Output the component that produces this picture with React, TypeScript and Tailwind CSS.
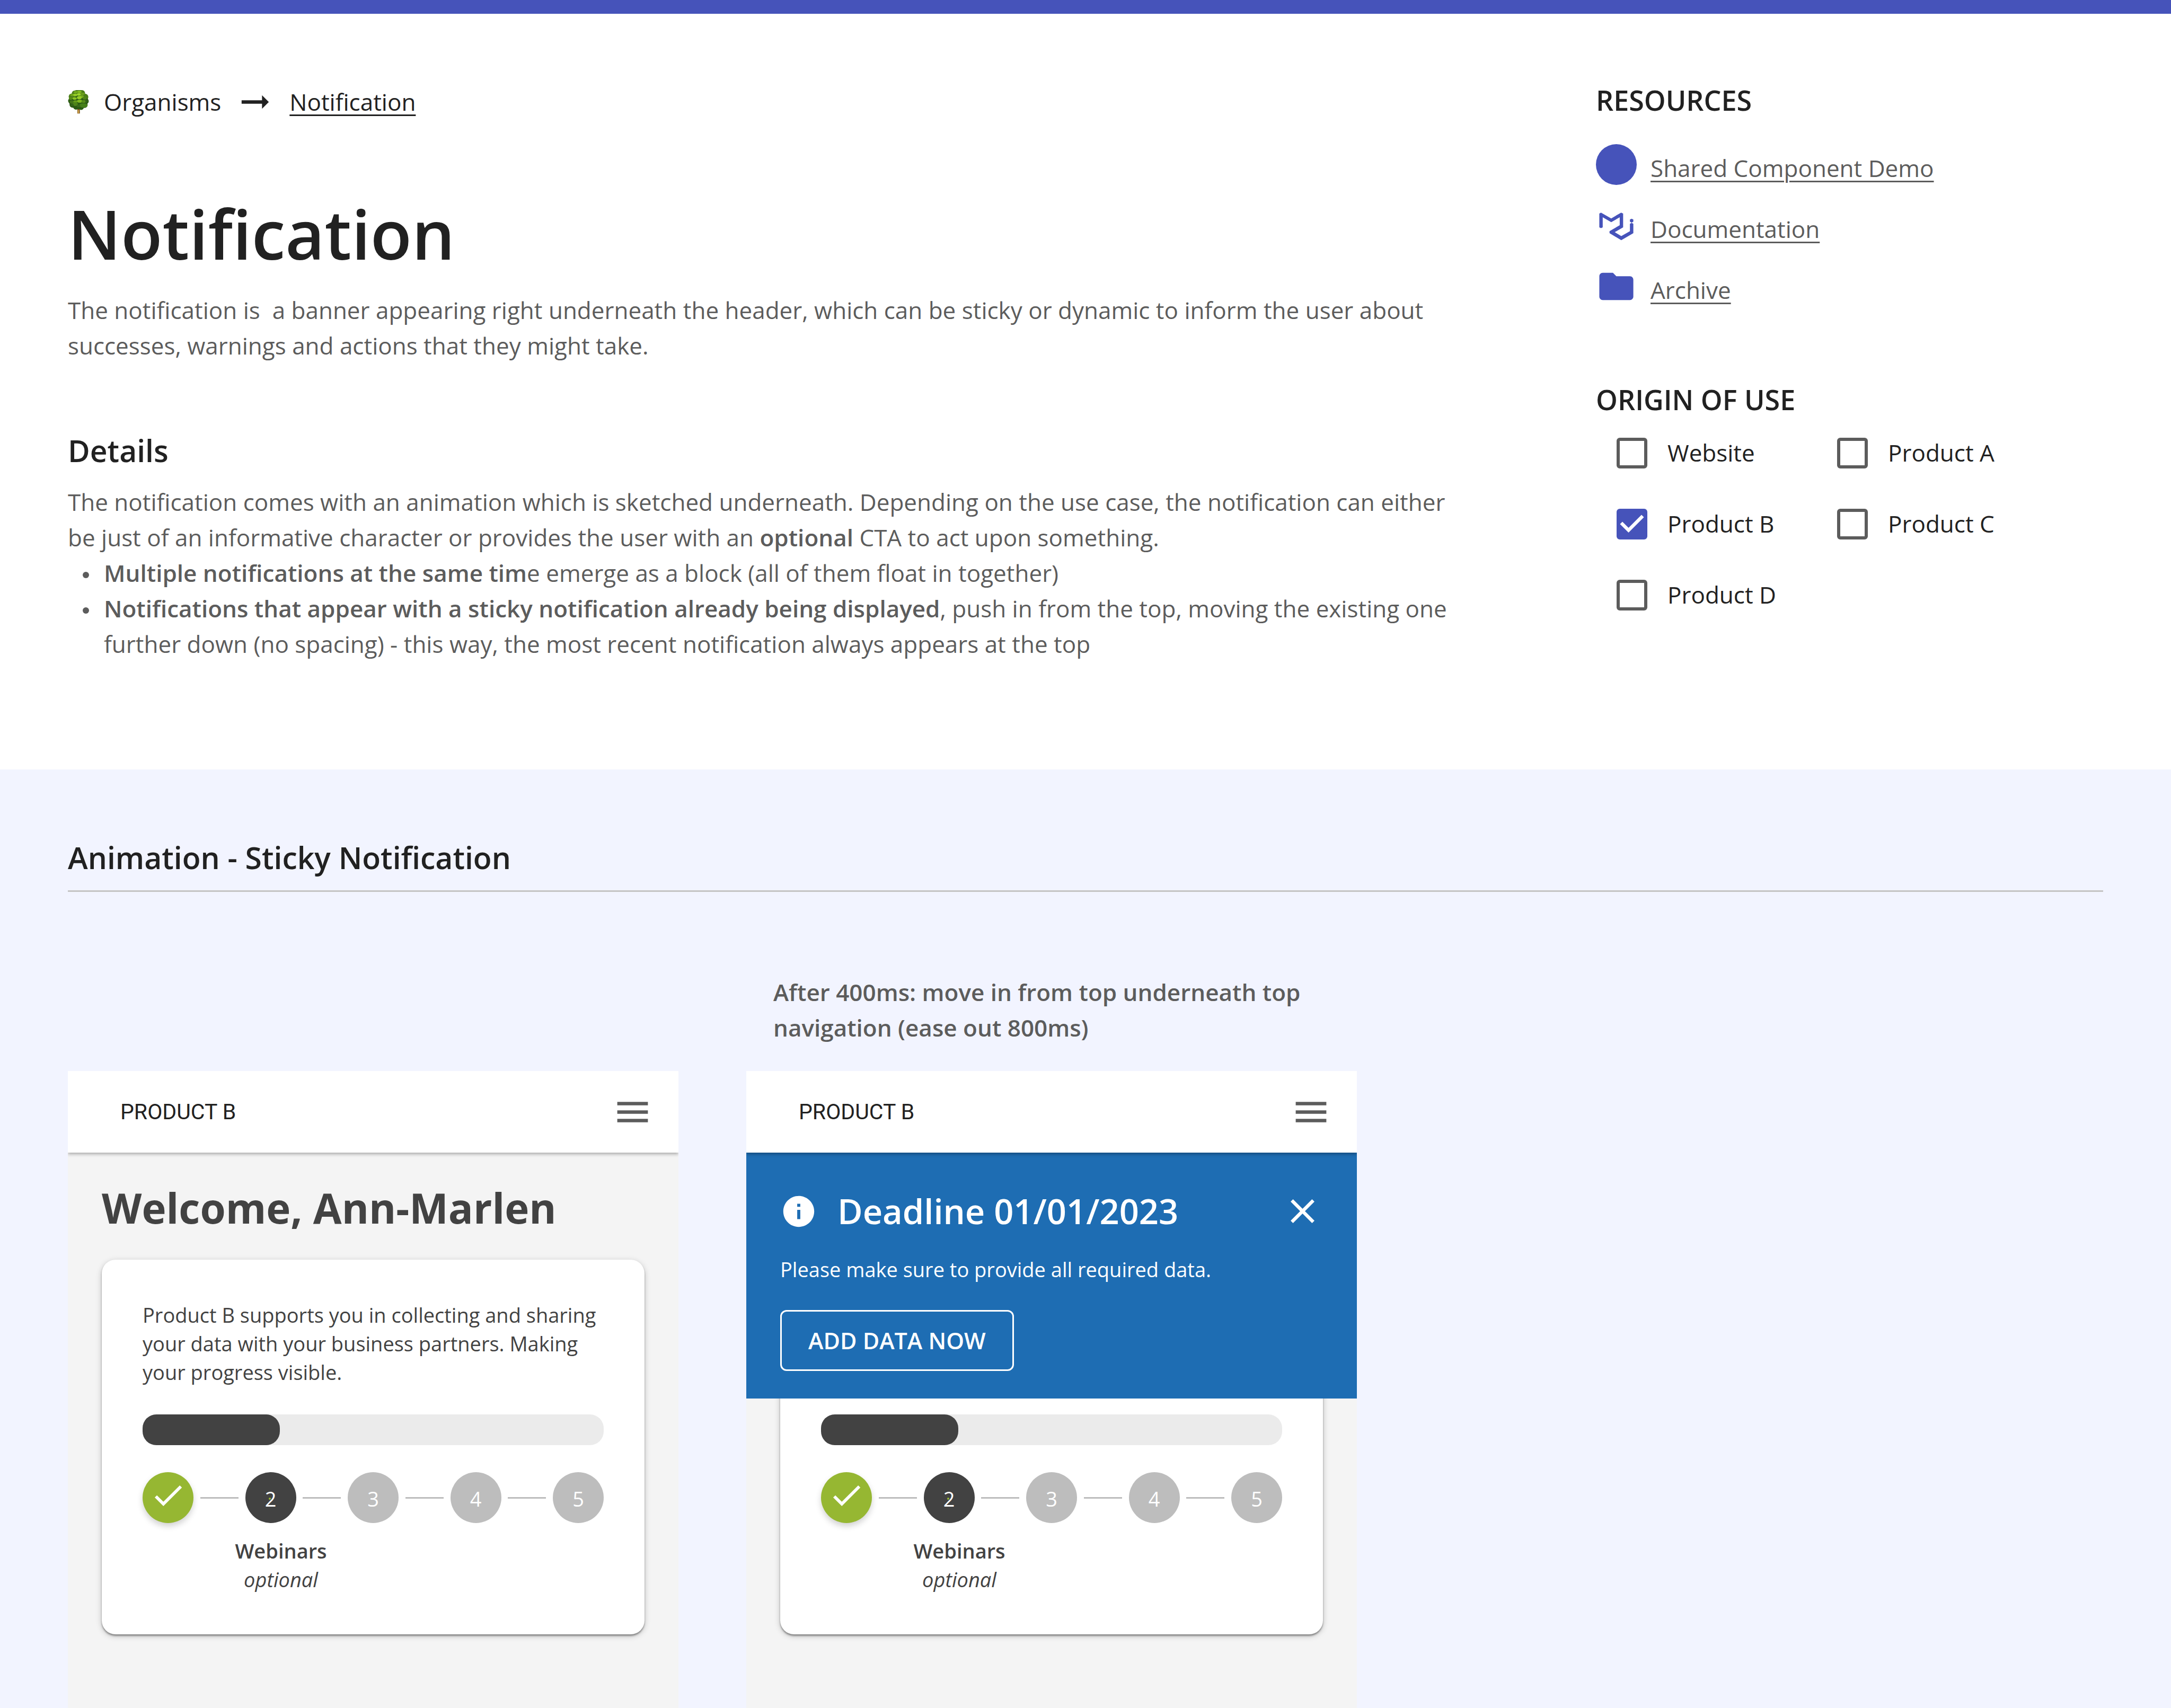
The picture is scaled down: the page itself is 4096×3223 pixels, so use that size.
import React from 'react';

const MENU = 'M3 18h18v-2H3v2zm0-5h18v-2H3v2zm0-7v2h18V6H3z';
const ARROW = 'M16.01 11H4v2h12.01v3L20 12l-3.99-4v3z';
const CLOSE = 'M19 6.41 17.59 5 12 10.59 6.41 5 5 6.41 10.59 12 5 17.59 6.41 19 12 13.41 17.59 19 19 17.59 13.41 12z';
const INFO = 'M12 2C6.48 2 2 6.48 2 12s4.48 10 10 10 10-4.48 10-10S17.52 2 12 2zm1 15h-2v-6h2v6zm0-8h-2V7h2v2z';
const FOLDER = 'M10 4H4c-1.1 0-1.99.9-1.99 2L2 18c0 1.1.9 2 2 2h16c1.1 0 2-.9 2-2V8c0-1.1-.9-2-2-2h-8l-2-2z';

function Icon({ d, className }: { d: string; className: string }) {
  return (
    <svg viewBox="0 0 24 24" fill="currentColor" aria-hidden="true" className={className}>
      <path d={d} />
    </svg>
  );
}

function TreeIcon() {
  const edges = [
    [115, 88, 26], [90, 96, 22], [140, 94, 22], [68, 118, 22], [163, 120, 22], [62, 148, 20],
    [168, 150, 20], [74, 174, 22], [158, 176, 22], [98, 190, 20], [134, 192, 20],
  ] as const;
  const leaves = [
    [95, 86, 14, 8, '#76ad1c'], [122, 84, 15, 8, '#86bf20'], [145, 98, 14, 9, '#6a9f1b'], [70, 106, 13, 9, '#6fa41c'],
    [92, 106, 14, 9, '#93cc26'], [118, 102, 14, 9, '#9dd42c'], [138, 118, 15, 10, '#74ab1e'], [160, 128, 14, 11, '#4f8417'],
    [60, 130, 13, 11, '#568b18'], [88, 131, 15, 9, '#8bc423'], [121, 125, 17, 11, '#95cd27'], [68, 156, 15, 11, '#44751a'],
    [124, 150, 20, 11, '#7fb821'], [93, 153, 14, 9, '#659b1c'], [92, 171, 19, 13, '#4d8419'], [150, 180, 30, 15, '#46801a'],
    [152, 152, 16, 10, '#558c1a'], [70, 178, 12, 9, '#33631a'], [115, 184, 13, 9, '#39691a'], [174, 150, 10, 12, '#33621a'],
  ] as const;
  return (
    <svg viewBox="40 72 150 168" aria-hidden="true" className="h-[45px] w-10">
      <rect x="107" y="200" width="18" height="38" rx="2" fill="#7a5420" />
      <rect x="110" y="212" width="9" height="25" fill="#d0a24a" />
      <ellipse cx="115" cy="143" rx="68" ry="64" fill="#2c5c14" />
      {edges.map(([cx, cy, r]) => (
        <circle key={`${cx}-${cy}`} cx={cx} cy={cy} r={r} fill={cy < 130 ? '#4a7d18' : '#2b5a14'} />
      ))}
      {leaves.map(([cx, cy, rx, ry, fill]) => (
        <ellipse key={`${cx}-${cy}`} cx={cx} cy={cy} rx={rx} ry={ry} fill={fill} />
      ))}
    </svg>
  );
}

function MuiLogo() {
  return (
    <svg viewBox="12 492 288 288" fill="currentColor" aria-hidden="true" className="size-[77px]">
      <path d="M36 552l12-7 72 41 70-41 14 7v97l-59 34 46 28 61-35v-52l12-7 12 7v66l-85 50-83-50v-14l72-42v-56l-60 35-60-35v71l-12 6-12-6z" />
      <path d="M264 588l12 6v15l-12 7-12-7v-15z" />
    </svg>
  );
}

const resources = [
  { label: 'Shared Component Demo', icon: <span className="size-[77px] rounded-full bg-[#4653ba]" /> },
  { label: 'Documentation', icon: <MuiLogo /> },
  { label: 'Archive', icon: <Icon d={FOLDER} className="size-[77px]" /> },
];

const origins = [
  { label: 'Website', checked: false },
  { label: 'Product A', checked: false },
  { label: 'Product B', checked: true },
  { label: 'Product C', checked: false },
  { label: 'Product D', checked: false },
];

function OriginCheckbox({ label, checked }: { label: string; checked: boolean }) {
  return (
    <label className="flex items-center gap-[38px] text-[44px] leading-[67px] text-[#212121]">
      <span className="grid size-[58px] place-items-center">
        <input
          type="checkbox"
          defaultChecked={checked}
          className="peer col-start-1 row-start-1 size-[58px] appearance-none rounded-md border-[6px] border-[#5c5c5c] bg-white checked:border-[#4653ba] checked:bg-[#4653ba]"
        />
        <svg
          viewBox="3 3 18 18"
          fill="white"
          aria-hidden="true"
          className="pointer-events-none invisible col-start-1 row-start-1 size-[58px] peer-checked:visible"
        >
          <path d="M10 17l-5-5 1.41-1.41L10 14.17l7.59-7.59L19 8l-9 9z" />
        </svg>
      </span>
      {label}
    </label>
  );
}

function Step({ n }: { n: number }) {
  if (n === 1) {
    return (
      <li className="grid size-24 place-items-center rounded-full bg-[#96b732] text-white shadow-[0_6px_12px_rgba(0,0,0,0.18)]">
        <svg viewBox="0 1.5 24 24" fill="currentColor" aria-hidden="true" className="size-[70px]">
          <path d="M9 16.17 4.83 12l-1.42 1.41L9 19 21 7l-1.41-1.41z" />
        </svg>
      </li>
    );
  }
  if (n === 2) {
    return (
      <li className="relative grid size-24 place-items-center rounded-full bg-[#424242] text-[38px] leading-[54px] text-white">
        <span className="pt-1">2</span>
        <span className="absolute top-12 left-11 size-1 rounded-full bg-[#96b732]" />
      </li>
    );
  }
  return (
    <li className="grid size-24 place-items-center rounded-full bg-[#bdbdbd] text-[38px] leading-[54px] text-white">
      <span className="pt-1">{n}</span>
    </li>
  );
}

function Screen({ notification }: { notification?: React.ReactNode }) {
  const covered = notification ? 'invisible' : '';
  return (
    <article className="relative flex flex-col bg-[#f4f4f4]">
      <header className="relative z-20 flex h-[154px] items-center justify-between bg-white pr-12 pl-[99px] shadow-[0_3px_6px_rgba(0,0,0,0.3)] [clip-path:inset(0_0_-20px_0)]">
        <span className="font-[Roboto,sans-serif] text-[41px] leading-[67px] text-[#212121]">PRODUCT B</span>
        <button type="button" aria-label="Open menu" className="text-[#5c5c5c]">
          <Icon d={MENU} className="size-[77px]" />
        </button>
      </header>
      {notification}
      <div className="px-16 pt-14 pb-[140px] text-[#424242]">
        <h3 className={`text-[78px] leading-24 font-bold ${covered}`}>Welcome, Ann-Marlen</h3>
        <div className="mt-[50px] rounded-[26px] bg-white p-[77px] shadow-[0_3px_3px_rgba(0,0,0,0.35),0_3px_12px_rgba(0,0,0,0.22)]">
          <p className={`text-[38px] leading-[54px] ${covered}`}>
            Product B supports you in collecting and sharing
            <br />
            your data with your business partners. Making
            <br />
            your progress visible.
          </p>
          <div
            role="progressbar"
            aria-label="Progress"
            aria-valuenow={30}
            aria-valuemin={0}
            aria-valuemax={100}
            className="mt-[53px] h-[58px] rounded-[26px] bg-[#ebebeb]"
          >
            <div className="h-full w-[259px] rounded-[26px] bg-[#424242]" />
          </div>
          <ol className="mt-[51px] flex items-center justify-between">
            {[1, 2, 3, 4, 5].map((n) => (
              <React.Fragment key={n}>
                {n > 1 && <li aria-hidden="true" className="h-[3px] w-18 bg-[#bdbdbd]" />}
                <Step n={n} />
              </React.Fragment>
            ))}
          </ol>
          <div className="mt-[25px] w-[60%] text-center text-[38px] leading-[54px]">
            <p className="font-semibold">Webinars</p>
            <p className="italic">optional</p>
          </div>
        </div>
      </div>
    </article>
  );
}

function DeadlineNotification() {
  return (
    <div role="alert" className="absolute inset-x-0 top-[154px] z-10 bg-[#1e6db3] px-16 pt-[72px] pb-[52px] text-white">
      <div className="flex h-[77px] items-center">
        <Icon d={INFO} className="size-[70px]" />
        <h3 className="ml-[38px] grow text-[65px] leading-[77px] font-semibold">Deadline 01/01/2023</h3>
        <button type="button" aria-label="Close">
          <Icon d={CLOSE} className="size-[77px]" />
        </button>
      </div>
      <p className="mt-[44px] text-[38px] leading-[54px]">Please make sure to provide all required data.</p>
      <button
        type="button"
        className="mt-[50px] h-[115px] rounded-xl border-[3px] border-white px-[50px] text-[43px] leading-[67px] font-semibold"
      >
        ADD DATA NOW
      </button>
    </div>
  );
}

export default function App() {
  return (
    <main className="flex min-h-screen flex-col border-t-[26px] border-[#4653ba] bg-[#f2f4ff] font-['Open_Sans',sans-serif] text-[#212121]">
      <section className="flex justify-between bg-white px-32 pt-32 pb-[203px]">
        <div>
          <nav aria-label="Breadcrumb" className="flex h-[77px] items-center text-[44px] leading-[67px]">
            <TreeIcon />
            <span className="ml-7">Organisms</span>
            <Icon d={ARROW} className="mx-[26px] size-[77px]" />
            <a href="#notification" className="underline decoration-[3px] underline-offset-[7px]">
              Notification
            </a>
          </nav>
          <h1 id="notification" className="mt-[133px] text-[128px] leading-[154px] font-semibold">
            Notification
          </h1>
          <p className="mt-[34px] text-[44px] leading-[67px] whitespace-pre-wrap text-[#5c5c5c]">
            {'The notification is  a banner appearing right underneath the header, which can be sticky or dynamic to inform the user about'}
            <br />
            successes, warnings and actions that they might take.
          </p>
          <h2 className="mt-[124px] text-[57px] leading-[80px] font-semibold">Details</h2>
          <div className="mt-6 text-[44px] leading-[67px] text-[#5c5c5c]">
            <p>
              The notification comes with an animation which is sketched underneath. Depending on the use case, the notification can either
              <br />
              be just of an informative character or provides the user with an <b className="font-semibold">optional</b> CTA to act upon something.
            </p>
            <ul>
              {[
                <>
                  <b className="font-semibold">Multiple notifications at the same tim</b>e emerge as a block (all of them float in together)
                </>,
                <>
                  <b className="font-semibold">Notifications that appear with a sticky notification already being displayed</b>, push in from the top, moving the existing one
                  <br />
                  further down (no spacing) - this way, the most recent notification always appears at the top
                </>,
              ].map((item, i) => (
                <li key={i} className="flex pl-7">
                  <span aria-hidden="true" className="mt-[31px] mr-7 size-3 shrink-0 rounded-full bg-[#5c5c5c]" />
                  <span>{item}</span>
                </li>
              ))}
            </ul>
          </div>
        </div>

        <aside className="w-[957px] shrink-0">
          <h2 className="text-[52px] leading-[70px] font-semibold">RESOURCES</h2>
          <ul className="mt-12 flex flex-col gap-[38px] text-[#4653ba]">
            {resources.map(({ label, icon }) => (
              <li key={label} className="flex h-[77px] items-end gap-[26px]">
                {icon}
                <a
                  href={`#${label.split(' ')[0].toLowerCase()}`}
                  className="text-[44px] leading-[64px] text-[#5c5c5c] underline decoration-[3px] underline-offset-[7px]"
                >
                  {label}
                </a>
              </li>
            ))}
          </ul>
          <fieldset className="mt-[140px]">
            <legend className="text-[52px] leading-[70px] font-semibold">ORIGIN OF USE</legend>
            <div className="mt-8 grid grid-cols-[416px_416px] gap-y-[67px] pl-[39px]">
              {origins.map((o) => (
                <OriginCheckbox key={o.label} {...o} />
              ))}
            </div>
          </fieldset>
        </aside>
      </section>

      <section className="flex grow flex-col px-32 pt-[126px]">
        <h2 className="border-b-[3px] border-[#c4c4c4] pb-[22px] text-[57px] leading-[80px] font-semibold">
          Animation - Sticky Notification
        </h2>
        <div className="mt-[156px] grid grow grid-cols-[1152px_1152px] grid-rows-[auto_1fr] gap-x-32 gap-y-12">
          <p className="col-start-2 pl-[51px] text-[44px] leading-[67px] font-semibold text-[#5c5c5c]">
            After 400ms: move in from top underneath top
            <br />
            navigation (ease out 800ms)
          </p>
          <div className="col-start-1 row-start-2 grid">
            <Screen />
          </div>
          <div className="col-start-2 row-start-2 grid">
            <Screen notification={<DeadlineNotification />} />
          </div>
        </div>
      </section>
    </main>
  );
}
